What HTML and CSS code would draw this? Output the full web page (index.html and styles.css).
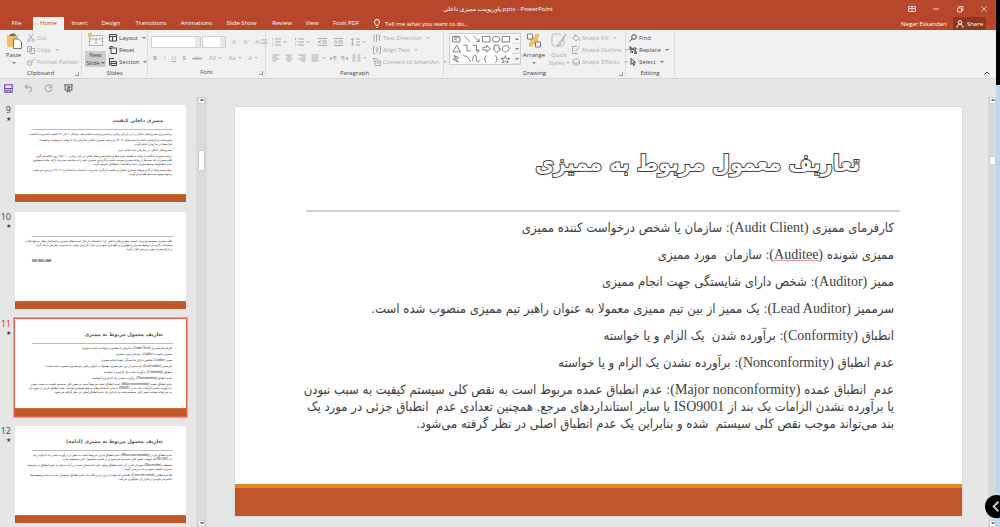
FILE: index.html
```html
<!DOCTYPE html>
<html lang="en">
<head>
<meta charset="utf-8">
<title>PowerPoint</title>
<link rel="stylesheet" href="styles.css">
</head>
<body>
<div class="app">
  <header class="titlebar">
    <div class="doc-title" dir="ltr"><bdi dir="rtl">پاورپوینت ممیزی داخلی</bdi>.pptx - PowerPoint</div>
    <div class="window-controls">
      <button aria-label="Ribbon display options"><svg viewBox="0 0 8 8"><path d="M.5 1.5h7v5h-7zM.5 3.5h7M4 1.5v5" /></svg></button>
      <button aria-label="Minimize"><svg viewBox="0 0 8 8"><path d="M1 4h6"/></svg></button>
      <button aria-label="Restore"><svg viewBox="0 0 8 8"><path d="M1.500 3h4v4h-4zM3 3V1.500h4v4H5.500"/></svg></button>
      <button aria-label="Close"><svg viewBox="0 0 8 8"><path d="M1.500 1.500l5 5M6.500 1.500l-5 5"/></svg></button>
    </div>
  </header>
  <nav class="tabs">
    <button class="tab tab-file">File</button>
    <button class="tab tab-home active">Home</button>
    <button class="tab tab-insert">Insert</button>
    <button class="tab tab-design">Design</button>
    <button class="tab tab-trans">Transitions</button>
    <button class="tab tab-anim">Animations</button>
    <button class="tab tab-show">Slide Show</button>
    <button class="tab tab-review">Review</button>
    <button class="tab tab-view">View</button>
    <button class="tab tab-pdf">Foxit PDF</button>
    <button class="tell-me"><svg viewBox="0 0 8 9"><path d="M3 6.500C3 5 1.500 4.500 1.500 3a2.500 2.500 0 0 1 5 0C6.500 4.500 5 5 5 6.500zM3 8.300h2"/></svg>Tell me what you want to do...</button>
    <div class="account"><button class="user">Negar Eskandari</button><button class="share"><svg viewBox="0 0 8 8"><path d="M4 .7a1.700 1.700 0 1 1 0 3.500 1.700 1.700 0 1 1 0-3.500M1 8c0-5 6-5 6 0"/></svg>Share</button></div>
  </nav>

  <section class="ribbon">
    <div class="group g-clipboard">
      <div class="tools">
        <button class="big"><svg class="big-icon" viewBox="0 0 16 17"><path class="gold" d="M1 3h11v12H1z"/><path class="dark" d="M4 4V2h1.500a1.500 1.500 0 0 1 2.500 0h1.500v2z"/><path class="paper" d="M7.500 7h5l3 3v6.500h-8z"/></svg><span>Paste</span><i class="caret"></i></button>
        <div class="stack off">
          <button><svg viewBox="0 0 8 8"><path d="M1.500 0l4 5.500M6 0L2.500 5.500"/><circle cx="1.700" cy="6.500" r="1.200"/><circle cx="6.300" cy="6.500" r="1.200"/></svg>Cut</button>
          <button><svg viewBox="0 0 8 8"><path d="M.5.5h4v5h-4zM3 2.500h4.500v5H3z"/></svg>Copy<i class="caret"></i></button>
          <button><svg viewBox="0 0 8 8"><path d="M7.500.5L4.500 3.500M1 3l4 3-1.500 1.500L0 6zM2.500 2L6 5"/></svg>Format Painter</button>
        </div>
      </div>
      <div class="group-name">Clipboard<i class="launch"></i></div>
    </div>
    <div class="group g-slides">
      <div class="tools">
        <button class="big pressed"><svg class="big-icon" viewBox="0 0 16 15"><path class="thin" stroke-dasharray="2 1" d="M1.500 2.500h13v10h-13zM1.500 6h13M8 6v6"/><path class="gold" d="M0 0h4v4H0z"/></svg><span class="pressed-label">New<br>Slide<i class="caret"></i></span></button>
        <div class="stack">
          <button><svg viewBox="0 0 8 8"><path d="M.5.5h7v6.500h-7zM.5 2.500h7M3.500 2.500V7"/></svg>Layout<i class="caret"></i></button>
          <button><svg viewBox="0 0 8 8"><path d="M2 2h5.500v5.500H2zM4 .5H1V3M0 2l1 1 1-1"/></svg>Reset</button>
          <button><svg viewBox="0 0 8 8"><path d="M2 3.500h5.500v4H2zM2 5.500h5.500M0 .5h5M.5.500v7"/></svg>Section<i class="caret"></i></button>
        </div>
      </div>
      <div class="group-name">Slides</div>
    </div>
    <div class="group g-font">
      <div class="tools rows off">
        <div class="row font-row"><span class="boxes"><select class="font-name" aria-label="Font"><option></option></select><select class="font-size" aria-label="Font size"><option></option></select></span><button>A˄</button><button>A˅</button><button>A⌫</button></div>
        <div class="row spread"><button><b>B</b></button><button><i>I</i></button><button><u>U</u></button><button><b>S</b></button><button><s>abc</s></button><button>AV<i class="caret"></i></button><button>Aa<i class="caret"></i></button><button>A<i class="caret"></i></button></div>
      </div>
      <div class="group-name">Font<i class="launch"></i></div>
    </div>
    <div class="group g-paragraph">
      <div class="tools">
        <div class="rows off para">
          <div class="row spread"><button aria-label="Bullets"><svg viewBox="0 0 9 8"><path d="M0 1h1M3 1h6M0 4h1M3 4h6M0 7h1M3 7h6"/></svg><i class="caret"></i></button><button aria-label="Numbering"><svg viewBox="0 0 9 8"><path d="M.5 0v2M3 1h6M0 4h1.500M3 4h6M0 7h1.500M3 7h6"/></svg><i class="caret"></i></button><button aria-label="Decrease indent"><svg viewBox="0 0 9 8"><path d="M0 .5h9M4 3h5M4 5h5M0 7.500h9M3 2.500L.5 4 3 5.500"/></svg></button><button aria-label="Increase indent"><svg viewBox="0 0 9 8"><path d="M0 .5h9M4 3h5M4 5h5M0 7.500h9M.5 2.500L3 4 .5 5.500"/></svg></button><button aria-label="Line spacing"><svg viewBox="0 0 9 8"><path d="M1.500.5v7M0 2L1.500.5 3 2M0 6l1.500 1.500L3 6M5 1h4M5 4h4M5 7h4"/></svg><i class="caret"></i></button></div>
          <div class="row spread"><button aria-label="Align left"><svg viewBox="0 0 8 8"><path d="M0 1h7M0 3h4M0 5h7M0 7h4"/></svg></button><button aria-label="Center"><svg viewBox="0 0 8 8"><path d="M0 1h7M1.500 3h4M0 5h7M1.500 7h4"/></svg></button><button aria-label="Align right"><svg viewBox="0 0 8 8"><path d="M0 1h7M3 3h4M0 5h7M3 7h4"/></svg></button><button aria-label="Justify"><svg viewBox="0 0 8 8"><path d="M0 1h7M0 3h7M0 5h7M0 7h7"/></svg><i class="caret"></i></button><button>▸¶</button><button>¶◂</button><button aria-label="Columns"><svg viewBox="0 0 8 8"><path d="M0 1h3M0 3h3M0 5h3M0 7h3M5 1h3M5 3h3M5 5h3M5 7h3"/></svg><i class="caret"></i></button></div>
        </div>
        <div class="stack off">
          <button><svg viewBox="0 0 8 8"><path d="M1 0v8M3.500 0v8M6.500 7V1M5 2.500L6.500 1 8 2.500"/></svg>Text Direction<i class="caret"></i></button>
          <button><svg viewBox="0 0 8 8"><path d="M2 .5H.5v7H2M6 .5h1.500v7H6M2.500 4h3M4 1v6"/></svg>Align Text<i class="caret"></i></button>
          <button><svg viewBox="0 0 8 8"><path d="M0 .5h4L5.500 2M2 3h5.500v4.500H2zM0 .5L2 4M3.500 5h3"/></svg>Convert to SmartArt<i class="caret"></i></button>
        </div>
      </div>
      <div class="group-name">Paragraph</div>
    </div>
    <div class="group g-drawing">
      <div class="tools">
        <div class="gallery">
          <svg viewBox="0 0 64 32"><g class="shape"><path d="M1.500 2.500h8v6h-8zM3 4h5M3 6h3M14 2l6 6M24 2l6 6M30 5v3h-3M33.500 2.500h8v6h-8zM54.500 2.500h8v6h-8zM2 19l4-7 4 7zM13 12h4v6h4M23 12h4v6h3M28 16l2 2-2 2M34 14h4v-2l4 4-4 3v-2h-4zM46 12h5v4h2l-4 4-4-4h1zM62 15c-1-4-7-3-7 0-2 5 6 5 6 2l2-2M3 23l5 2-3 2 3 3-6-3 3-1zM13 23q6 1 8 7M23 29c0-8 4-8 4-3s3 5 4 1M38 23c-3 1 0 3-3 4 3 0 0 2 3 4M47 23c3 1 0 3 3 4-3 0 0 2-3 4M58 23l1 3h4l-3 2 1 3-3-2-3 2 1-3-3-2h4z"/><ellipse cx="48" cy="5.500" rx="4" ry="3"/></g></svg>
          <div class="gallery-nav"><button aria-label="Up"><i class="caret up"></i></button><button aria-label="Down"><i class="caret"></i></button><button aria-label="More"><i class="caret"></i></button></div>
        </div>
        <button class="big"><svg class="big-icon" viewBox="0 0 16 16"><path class="gold" d="M4 4h8v8H4z"/><path class="paper" d="M1.500 1.500h5v5h-5zM9.500 9.500h5v5h-5z"/><path class="gold" d="M9 1.500h4V5H9zM3 10h4v4H3z"/></svg><span>Arrange</span><i class="caret"></i></button>
        <button class="big off"><svg class="big-icon" viewBox="0 0 16 17"><path class="thin" d="M13 7v5q0 2-2 2H3q-2 0-2-2V4q0-2 2-2h7"/><path d="M15 2L8 11l-2 3 3-1z"/></svg><span>Quick<br>Styles<i class="caret"></i></span></button>
        <div class="stack off">
          <button><svg viewBox="0 0 8 8"><path d="M1 4l3-3 3 3-3 3zM3 0v3M7.500 5v2"/></svg>Shape Fill<i class="caret"></i></button>
          <button><svg viewBox="0 0 8 8"><path d="M5 .5H.5v7h5M7.500.500l-4 5"/></svg>Shape Outline<i class="caret"></i></button>
          <button><svg viewBox="0 0 8 8"><path d="M1 2l4-1.500 2.500 2V6L4 7.500 1 6zM1 4l3 1.500L7.500 4"/></svg>Shape Effects<i class="caret"></i></button>
        </div>
      </div>
      <div class="group-name">Drawing<i class="launch"></i></div>
    </div>
    <div class="group g-editing">
      <div class="tools">
        <div class="stack">
          <button><svg viewBox="0 0 8 8"><circle cx="5" cy="3" r="2.300"/><path d="M3.300 4.700L.5 7.500"/></svg>Find</button>
          <button><svg viewBox="0 0 8 8"><path d="M1 0v4h2V2H1M4 2h3v2H4zM1 6h3M3 5l1 1-1 1M6 5v3h2V6H6"/></svg>Replace<i class="caret"></i></button>
          <button><svg viewBox="0 0 8 8"><path d="M2 .5v6l1.500-1.500L4.500 7.500l1-.5-1-2.500H6.500z"/></svg>Select<i class="caret"></i></button>
        </div>
      </div>
      <div class="group-name">Editing</div>
    </div>
    <button class="collapse" aria-label="Collapse the ribbon"><svg viewBox="0 0 8 8"><path d="M1.500 5.500L4 3l2.500 2.500"/></svg></button>
  </section>

  <div class="quick">
    <button aria-label="Save"><svg class="save" viewBox="0 0 8 8"><path d="M.7.700h6.600v6.600H.7zM.7 4h6.600M2.500 7V5.500h3V7"/></svg></button>
    <button aria-label="Undo"><svg viewBox="0 0 8 8"><path d="M3 .5L1 2.500l2 2M1 2.500h3.500a2.200 2.200 0 0 1 0 4.500"/></svg></button>
    <button aria-label="Redo"><svg viewBox="0 0 8 8"><path d="M6 1.500A3 3 0 1 0 7 4M7 .5V3H4.500"/></svg></button>
    <button aria-label="Start slide show"><svg class="show-icon" viewBox="0 0 8 8"><path d="M0 .7h8M1 .7v4.600h6V.7M4 5.300L2.500 7.500M4 5.300l1.500 2.200M3.500 2v2.200L5.500 3z"/></svg></button>
  </div>

  <main class="workspace">
    <aside class="panel">
      <ol class="thumbs">
        <li><div class="number">9<span>★</span></div>
          <div class="thumb" dir="rtl"><h2>ممیزی داخلی کیفیت</h2><div class="mini">
            <p><span>برنامه‌ریزی ممیزی‌های داخلی را در بازه‌ای زمانی برنامه‌ریزی‌شده انجام دهد. مراحل ۱- الی ۱۴ کیفیت (مدیریت) کیفیت</span></p>
            <p><span>تعیین‌شده و اثربخش باشد نیازمندی‌های ۱۹۰۱۱ و برنامه ممیزی داخلی سازمان باید با توجه به وضعیت و اهمیت</span><span>فرایندها در سازمان انجام گردد.</span></p>
            <p><span>ممیزی‌های داخلی در سازمان باید انجام پذیرد</span></p>
            <p><span>برنامه ممیزی سالیانه با توجه به اهمیت فرایندها و نتایج ممیزی‌های قبلی در بازه زمانی ۱۰ تا ۱۵ روز انجام می‌گیرد</span><span>کلیه ممیزان باید مستقل از واحد ممیزی‌شونده باشند و گزارش ممیزی خود را به نماینده مدیریت ارائه نمایند همچنین</span><span>عدم انطباق‌ها توسط ممیزان ثبت و اقدامات اصلاحی تعریف گردد.</span></p>
            <p><span>نتیجه ممیزی‌ها در گزارش‌های ممیزی داخلی و جلسه بازنگری مدیریت با استناد به استاندارد ۱۹۰۱۱ بررسی می‌شود</span><span>و جهت بهبود سیستم اقدام می‌گردد.</span></p></div><div class="base"></div></div></li>
        <li><div class="number">10<span>★</span></div>
          <div class="thumb" dir="rtl"><h2></h2><div class="mini"><p><span>کلیه ممیزی سیستم مدیریت کیفیت ممیزی‌های داخلی باید با استفاده از چک لیست‌های ممیزی و استانداردهای مرجع انجام</span><span>مستندات لازم نیز توسط ممیزان جمع‌آوری و نگهداری شود و در پایان گزارش نهایی به مدیریت سازمان ارائه گردد</span><span>و نتایج ممیزی مورد بررسی قرار گیرد.</span></p><p class="iso" dir="ltr">ISO 9001:2008</p></div><div class="base"></div></div></li>
        <li class="current"><div class="number">11<span>★</span></div>
          <div class="thumb" dir="rtl"><h2>تعاریف معمول مربوط به ممیزی</h2><div class="mini">
            <p>کارفرمای ممیزی (Audit Client): سازمان یا شخص درخواست کننده ممیزی</p><p>ممیزی شونده (Auditee): سازمان مورد ممیزی</p><p>ممیز (Auditor): شخص دارای شایستگی جهت انجام ممیزی</p><p>سرممیز (Lead Auditor): یک ممیز از بین تیم ممیزی معمولا به عنوان راهبر تیم ممیزی منصوب شده است.</p><p>انطباق (Conformity): برآورده شدن یک الزام و یا خواسته</p><p>عدم انطباق (Nonconformity): برآورده نشدن یک الزام و یا خواسته</p><p><span>عدم انطباق عمده (Major nonconformity): عدم انطباق عمده مربوط است به نقص کلی سیستم کیفیت به سبب نبودن</span><span>یا برآورده نشدن الزامات یک بند از ISO9001 یا سایر استانداردهای مرجع. همچنین تعدادی عدم انطباق جزئی در مورد یک</span><span>بند می‌تواند موجب نقص کلی سیستم شده و بنابراین یک عدم انطباق اصلی در نظر گرفته می‌شود.</span></p></div><div class="base"></div></div></li>
        <li><div class="number">12<span>★</span></div>
          <div class="thumb" dir="rtl"><h2>تعاریف معمول مربوط به ممیزی (ادامه)</h2><div class="mini">
            <p><span>عدم انطباق جزئی (Minor nonconformity): عدم انطباق جزئی مربوط است به نقص در برآورده شدن یک الزام از یک</span><span>بند ISO 9001 که موجب نقص کلی سیستم نمی‌شود و بر کیفیت محصول تاثیر مستقیم ندارد.</span></p>
            <p><span>مشاهده (Observation): موردی که در آن عدم انطباق وجود ندارد اما ممکن است در آینده منجر به عدم انطباق در سیستم</span><span>مدیریت کیفیت شود و باید بررسی گردد.</span></p>
            <p><span>اقدام اصلاحی (Corrective action): اقدامی که جهت از بین بردن علت یک عدم انطباق شناسایی شده یا سایر وضعیت‌ها</span><span>انجام می‌شود و از تکرار آن جلوگیری می‌کند.</span></p></div><div class="base"></div></div></li>
      </ol>
      <div class="scroll"><i class="arrow"><i class="caret up"></i></i><i class="knob"></i><i class="arrow end"><i class="caret"></i></i></div>
    </aside>
    <section class="stage">
      <article class="slide" dir="rtl" lang="fa">
        <h1>تعاریف معمول مربوط به ممیزی</h1>
        <div class="content">
          <p>کارفرمای ممیزی <bdi>(Audit Client)</bdi>: سازمان یا شخص درخواست کننده ممیزی</p>
          <p>ممیزی شونده <bdi>(<u>Auditee</u>)</bdi>: سازمان &nbsp;مورد ممیزی</p>
          <p>ممیز <bdi>(Auditor)</bdi>: شخص دارای شایستگی جهت انجام ممیزی</p>
          <p>سرممیز <bdi>(Lead Auditor)</bdi>: یک ممیز از بین تیم ممیزی معمولا به عنوان راهبر تیم ممیزی منصوب شده است.</p>
          <p>انطباق <bdi>(Conformity)</bdi>: برآورده شدن &nbsp;یک الزام و یا خواسته</p>
          <p>عدم انطباق <bdi>(Nonconformity)</bdi>: برآورده نشدن یک الزام و یا خواسته</p>
          <p><span>عدم &nbsp;انطباق عمده <bdi>(Major nonconformity)</bdi>: عدم انطباق عمده مربوط است به نقص کلی سیستم کیفیت به سبب نبودن</span><span>یا برآورده نشدن الزامات یک بند از <bdi>ISO9001</bdi> یا سایر استانداردهای مرجع. همچنین تعدادی عدم &nbsp;انطباق جزئی در مورد یک</span><span>بند می‌تواند موجب نقص کلی سیستم &nbsp;شده و بنابراین یک عدم انطباق اصلی در نظر گرفته می‌شود.</span></p>
        </div>
        <div class="base"></div>
      </article>
      <div class="scroll main-scroll"><i class="arrow"><i class="caret up"></i></i><i class="knob"></i><i class="arrow end"><i class="caret"></i></i></div>
    </section>
  </main>
</div>
<div class="edge"></div>
<button class="bubble" aria-label="Back"><svg viewBox="0 0 24 24"><circle cx="12" cy="12" r="12"/><path d="M14 7l-5 5 5 5"/></svg></button>
</body>
</html>
```
FILE: styles.css
```css
* { box-sizing: border-box; }
body {
  margin: 0;
  display: grid;
  grid-template-columns: 1fr 4px;
  min-height: 100vh;
  overflow: hidden;
  background: #e6e6e6;
  color: #444;
  font: 6px/10px "Open Sans", "Noto Sans", sans-serif;
}
button, select { margin: 0; padding: 0; border: 0; background: none; color: inherit; font: inherit; white-space: nowrap; }
svg { fill: none; stroke: currentColor; stroke-width: 1; }
p, h1, h2, ol { margin: 0; padding: 0; font-weight: normal; }
.app { min-width: 0; display: flex; flex-direction: column; }
.caret { display: inline-block; border: 2px solid transparent; border-top-color: currentColor; border-bottom: 0; margin-left: 2px; vertical-align: middle; opacity: .7; }
.caret.up { border-top: 0; border-bottom: 2px solid currentColor; }

.titlebar { display: grid; grid-template-columns: 1fr; height: 17px; background: #b7472a; color: #fff; }
.doc-title, .window-controls { grid-area: 1 / 1; }
.doc-title { padding-top: 4px; text-align: center; font-family: "Open Sans", "DejaVu Sans", sans-serif; }
.window-controls { display: flex; justify-content: flex-end; align-items: center; gap: 16px; padding-right: 8px; color: #f0d0c6; }
.window-controls button, .window-controls svg { width: 8px; height: 8px; display: block; }

.tabs { display: flex; height: 13px; background: #b7472a; color: #fff; }
.tab { text-align: center; flex: none; line-height: 13px; }
.tab-file { width: 33px; }
.tab-home { width: 31px; }
.tab-insert { width: 31px; }
.tab-design { width: 32px; }
.tab-trans { width: 48px; }
.tab-anim { width: 43px; }
.tab-show { width: 47px; }
.tab-review { width: 34px; }
.tab-view { width: 26px; }
.tab-pdf { width: 42px; }
.tab.active { background: #f1f1f1; color: #c43e1c; }
.tell-me { display: flex; align-items: center; gap: 4px; padding-left: 6px; }
.tell-me svg { width: 8px; height: 9px; }
.account { margin-left: auto; display: flex; gap: 6px; padding-right: 10px; }
.share { display: flex; align-items: center; gap: 3px; padding: 0 3px; background: #8f3621; }
.share svg { width: 8px; height: 8px; }

.ribbon { display: flex; height: 49px; background: #f1f1f1; border-bottom: 1px solid #d6d6d6; }
.group { flex: none; display: flex; flex-direction: column; border-right: 1px solid #dcdcdc; margin: 1px 0; }
.g-clipboard { width: 82px; }
.g-slides { width: 66px; }
.g-font { width: 118px; }
.g-paragraph { width: 178px; }
.g-drawing { width: 182px; }
.g-editing { width: 49px; }
.tools { display: flex; height: 37px; gap: 3px; padding: 1px 3px 0; }
.group-name { text-align: center; line-height: 10px; position: relative; }
.launch { position: absolute; right: 2px; bottom: 2px; width: 4px; height: 4px; border: solid #999; border-width: 0 1px 1px 0; }
.big { display: flex; flex-direction: column; align-items: center; line-height: 8px; width: 21px; flex: none; }
.big-icon { width: 16px; height: 17px; margin-bottom: 2px; flex: none; }
.big > .caret { margin: 3px 0 0; }
.gold { fill: #f0c069; stroke: none; }
.dark { fill: #666; stroke: none; }
.paper { fill: #fff; stroke: #777; }
.thin { stroke: #999; }
.pressed-label { background: #cdcdcd; width: 21px; }
.big span .caret { margin-left: 1px; }
.stack { display: flex; flex-direction: column; }
.stack button { display: flex; align-items: center; gap: 2px; height: 12px; text-align: left; }
.stack svg { width: 8px; height: 8px; }
.off { color: #aaa; }
.off .thin { stroke: #bbb; }
.rows { flex-direction: column; gap: 4px; padding-top: 5px; }
.para { display: flex; width: 100px; padding-top: 4px; }
.row { display: flex; gap: 4px; height: 12px; align-items: center; }
.spread { justify-content: space-between; padding: 0 4px 0 2px; }
.row svg { width: 9px; height: 8px; vertical-align: middle; }
.font-row { gap: 6px; }
.boxes { display: flex; gap: 1px; }
.font-name, .font-size { appearance: none; height: 12px; border: 1px solid #d0d0d0; background: linear-gradient(to left, #e8e8e8 5px, #fff 5px); color: #aaa; }
.font-name { width: 50px; }
.font-size { width: 24px; }
.g-paragraph .tools { padding-left: 4px; }
.gallery { display: flex; width: 72px; height: 32px; background: #fff; border: 1px solid #ccc; margin-top: 1px; }
.gallery svg { width: 63px; height: 30px; }
.shape { stroke: #777; stroke-width: 1; }
.gallery-nav { display: flex; flex-direction: column; width: 8px; background: #f4f4f4; }
.gallery-nav button { flex: 1; line-height: 6px; border-bottom: 1px solid #ddd; }
.g-drawing .tools { gap: 1px; padding-left: 5px; }
.g-drawing .big { width: 24px; }
.collapse { margin: auto 5px 1px auto; }
.collapse svg { display: block; width: 8px; height: 8px; }

.quick { display: flex; align-items: center; gap: 11px; height: 18px; padding-left: 4px; background: #e6e6e6; color: #aaa; }
.quick svg { display: block; width: 9px; height: 9px; }
.save { color: #7146b5; }
.show-icon { color: #666; }

.workspace { flex: 1; display: flex; }
.panel { flex: none; width: 211px; display: flex; border-right: 1px solid #ececec; }
.thumbs { flex: 1; list-style: none; padding-top: 8px; display: flex; flex-direction: column; gap: 10px; }
.thumbs li { display: flex; height: 97px; gap: 2px; }
.number { width: 13px; text-align: right; padding-right: 2px; font-size: 9px; }
.number span { display: block; font-size: 6px; line-height: 8px; }
.current .number span { color: #444; }
.thumb { width: 171px; background: #fff; display: flex; flex-direction: column; overflow: hidden; font-family: "Liberation Serif", "DejaVu Sans", serif; }
.thumb h2 { height: 25px; margin: 0 13px 0 17px; padding: 9px 10px 0 0; border-bottom: 1px solid #bbb; font: bold 5px/12px "DejaVu Sans", sans-serif; white-space: nowrap; color: #555; }
.mini { flex: 1; padding: 2px 14px 0 17px; font-size: 3px; line-height: 4px; color: #111; }
.mini p { margin-bottom: 2px; white-space: nowrap; }
.mini span { display: block; }
.mini .iso { padding-top: 6px; text-align: left; font-weight: bold; }
.thumb .base { height: 8px; border-top: 1px solid #c9702a; background: #bf572b; }
.current .number { color: #c43e1c; }
.current .thumb { outline: 1px solid #e9604f; box-shadow: 0 0 0 2px #f0a090; }
.scroll { width: 11px; margin: 0 3px 0 auto; background: #dadada; display: flex; flex-direction: column; align-items: center; }
.arrow { width: 7px; height: 7px; background: #fff; border: 1px solid #ccc; line-height: 4px; }
.arrow .caret { display: block; margin: 1px 0 0 1px; border-width: 2px 1px 0; }
.arrow .caret.up { border-width: 0 1px 2px; }
.arrow.end { margin: auto 0 0; }
.panel .knob { width: 7px; height: 21px; background: #fff; border: 1px solid #ccc; margin-top: 46px; }

.stage { flex: 1; min-width: 0; display: flex; }
.slide { flex: 1; min-width: 0; margin: 10px 26px 11px 24px; background: #fff; display: flex; flex-direction: column; outline: 1px solid #d8d8d8; color: #404040; font-family: "DejaVu Sans Condensed", "DejaVu Sans", sans-serif; }
.slide h1 { height: 105px; margin: 0 62px 0 71px; padding: 32px 40px 0 0; border-bottom: 2px solid #d0d0d0; color: #fff; font: bold 23px/48px "DejaVu Sans Condensed", "DejaVu Sans", sans-serif; white-space: nowrap; -webkit-text-stroke: 2px #444; paint-order: stroke fill; }
.content { flex: 1; padding: 7px 68px 0 71px; font-size: 13px; line-height: 17px; }
.content p { margin-bottom: 10px; white-space: nowrap; }
.content span { display: block; }
.content bdi { font: 14px/12px "Liberation Serif", serif; }
.content u { text-decoration: underline #d99; }
.slide .base { height: 32px; border-top: 4px solid #e08a1c; background: #bf572b; }
.main-scroll { width: 8px; margin: 0; background: #ddd8d8; }
.main-scroll .knob { width: 7px; height: 9px; background: #fff; border: 1px solid #ccc; margin-top: 52px; }
.edge { background: linear-gradient(#000 85px, #b8d8f2 85px); }
.bubble { position: absolute; right: -8px; bottom: 9px; }
.bubble svg { display: block; width: 23px; height: 23px; fill: #000; stroke: none; }
.bubble path { fill: none; stroke: #ccc; stroke-width: 2; }
```
